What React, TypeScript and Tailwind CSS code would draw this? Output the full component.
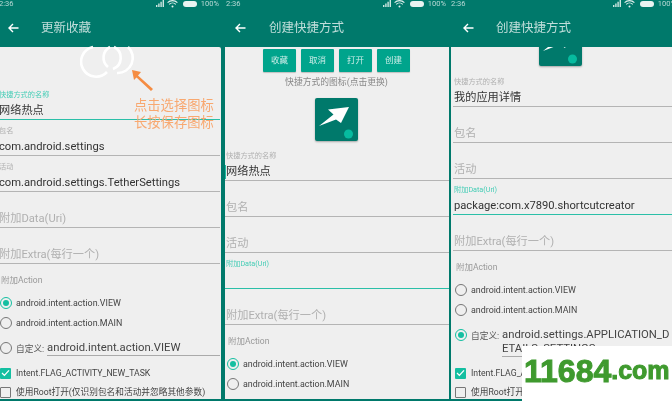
const font = { fontFamily: '"Roboto", "Noto Sans CJK SC", sans-serif' };

function StatusIcons() {
  return (
    <div className="flex items-center gap-[3px] text-[7.5px] leading-none text-white/70">
      <svg width="8" height="7" viewBox="0 0 8 7" fill="#cfe6e2">
        <path d="M0 7h1.4V5H0zM2.2 7h1.4V3.6H2.2zM4.4 7h1.4V1.8H4.4zM6.6 7H8V0H6.6z" />
      </svg>
      <svg width="11" height="8" viewBox="0 0 11 8" fill="none" stroke="#e6f2f0" strokeWidth="1.1">
        <path d="M.6 2.6a7 7 0 0 1 9.8 0M2.2 4.3a4.7 4.7 0 0 1 6.6 0" />
        <circle cx="5.5" cy="6.4" r="1" fill="#e6f2f0" stroke="none" />
      </svg>
      <div className="ml-[2px] h-[6px] w-[14px] rounded-[3px] bg-[#e8f3f1]" />
      <span className="ml-[1px]">100%</span>
    </div>
  );
}

function Header({ title, pad, titleGap }: { title: string; pad: string; titleGap: string }) {
  return (
    <div className={`h-[47px] shrink-0 bg-[#00796b] ${pad}`}>
      <div className="flex h-[7px] items-center justify-between text-[7.5px] leading-none text-white/70">
        <span>2:36</span>
        <StatusIcons />
      </div>
      <div className={`flex h-[42px] items-center ${titleGap}`}>
        <svg width="11" height="10" viewBox="0 0 11 10" fill="none" stroke="#fff" strokeWidth="1.4" className="shrink-0">
          <path d="M10.5 5H1M5 1 1 5l4 4" />
        </svg>
        <span className="text-[12.5px] leading-none text-white/75">{title}</span>
      </div>
    </div>
  );
}

function Field({
  label,
  value,
  placeholder,
  focused,
  cursor,
}: {
  label?: string;
  value?: string;
  placeholder?: string;
  focused?: boolean;
  cursor?: boolean;
}) {
  return (
    <div
      className={`flex h-[36px] flex-col justify-end border-b-[1.5px] pb-[1px] ${
        focused ? "border-[#2bbfa8]" : "border-[#b4b4b4]"
      }`}
    >
      {label && (
        <div className={`mb-[4px] pl-px text-[7.2px] leading-[11px] ${focused ? "text-[#45cdb6]" : "text-[#b0b0b0]"}`}>{label}</div>
      )}
      {value !== undefined ? (
        <div className="flex h-[14px] items-center text-[11.2px] leading-none text-[#333]">
          {cursor ? <span className="h-[14px] w-[1px] bg-[#1fbfa5]" /> : <span className="w-px" />}
          <span>{value}</span>
        </div>
      ) : placeholder ? (
        <div className="flex h-[14px] items-center pl-px text-[11.2px] leading-none text-[#b0b0b0]">{placeholder}</div>
      ) : (
        <div className="h-[14px]" />
      )}
    </div>
  );
}

function Radio({ checked }: { checked?: boolean }) {
  return (
    <span
      className={`flex h-[12px] w-[12px] shrink-0 items-center justify-center rounded-full border-[1.5px] ${
        checked ? "border-[#14bfa1]" : "border-[#777]"
      }`}
    >
      {checked && <span className="h-[6px] w-[6px] rounded-full bg-[#14bfa1]" />}
    </span>
  );
}

function RadioRow({ text, checked }: { text: string; checked?: boolean }) {
  return (
    <div className="flex h-[20px] items-center gap-[4px] pl-[2px] text-[8.9px] leading-none text-[#444]">
      <Radio checked={checked} />
      {text}
    </div>
  );
}

function CustomRow({ lines, checked, height }: { lines: string[]; checked?: boolean; height: string }) {
  return (
    <div className={`flex items-start gap-[4px] pl-[2px] pt-[9px] ${height}`}>
      <Radio checked={checked} />
      <span className="mt-[2px] w-[28px] shrink-0 whitespace-nowrap text-[8.7px] leading-[10px] text-[#555]">自定义:</span>
      <div className="-ml-px -mt-[1px] min-w-0 flex-1 overflow-hidden border-b border-[#aaa] text-[11.3px] leading-[14px] text-[#444]">
        {lines.map((line) => (
          <div key={line} className="whitespace-nowrap">
            {line}
          </div>
        ))}
      </div>
    </div>
  );
}

function CheckRow({ text, checked, height }: { text: string; checked?: boolean; height: string }) {
  return (
    <div className={`flex items-center gap-[5px] whitespace-nowrap pl-[2px] text-[8.7px] leading-none text-[#444] ${height}`}>
      {checked ? (
        <span className="flex h-[11px] w-[11px] shrink-0 items-center justify-center rounded-[1px] bg-[#14bfa1]">
          <svg width="9" height="8" viewBox="0 0 9 8" fill="none" stroke="#fff" strokeWidth="1.3">
            <path d="M1 4l2.4 2.4L8 1.4" />
          </svg>
        </span>
      ) : (
        <span className="h-[11px] w-[11px] shrink-0 rounded-[1px] border-[1.5px] border-[#777]" />
      )}
      {text}
    </div>
  );
}

function ActionLabel() {
  return <div className="mt-[10px] h-[19px] pl-[3px] text-[8.5px] leading-[12px] text-[#999]">附加Action</div>;
}

function ShortcutIcon() {
  return (
    <svg width="43" height="43" viewBox="0 0 43 43" className="shrink-0 rounded-[2px] bg-[#00796b] shadow-[0_1px_2px_rgba(0,0,0,0.3)]">
      <path d="M34 9 13 11.5l5.5 5L4 28l17-6.5 5 3.5z" fill="#fff" />
      <circle cx="33.5" cy="36" r="4.5" fill="#06bb9f" />
    </svg>
  );
}

function ActionButton({ text }: { text: string }) {
  return (
    <button className="flex h-[23px] w-[33px] items-center justify-center rounded-[1px] bg-[#00a48c] text-[8.5px] leading-none text-white/80 shadow-[0_1px_1px_rgba(0,0,0,0.2)]">
      {text}
    </button>
  );
}

function UpdatePanel() {
  return (
    <div className="flex w-[221px] shrink-0 flex-col">
      <Header title="更新收藏" pad="-ml-px pr-[2px]" titleGap="gap-[22px] pl-[9px]" />
      <div className="h-[352px] overflow-hidden rounded-tr-[2px] bg-[#efefef]">
        <div className="-ml-[2px] pr-[1px] pt-[37px]">
          <Field label="快捷方式的名称" value="网络热点" focused />
          <Field label="包名" value="com.android.settings" />
          <Field label="活动" value="com.android.settings.TetherSettings" />
          <Field placeholder="附加Data(Uri)" />
          <Field placeholder="附加Extra(每行一个)" />
          <ActionLabel />
          <RadioRow text="android.intent.action.VIEW" checked />
          <RadioRow text="android.intent.action.MAIN" />
          <CustomRow lines={["android.intent.action.VIEW"]} height="h-[30px]" />
          <CheckRow text="Intent.FLAG_ACTIVITY_NEW_TASK" checked height="h-[20px]" />
          <CheckRow text="使用Root打开(仅识别包名和活动并忽略其他参数)" height="h-[18px]" />
        </div>
      </div>
    </div>
  );
}

function CreatePanel() {
  return (
    <div className="ml-[4px] flex w-[224px] shrink-0 flex-col">
      <Header title="创建快捷方式" pad="pl-px pr-[3px]" titleGap="gap-[23px] pl-[9px]" />
      <div className="h-[352px] overflow-hidden bg-[#efefef]">
        <div className="flex justify-center gap-[5px] pr-[1px] pt-[2px]">
          <ActionButton text="收藏" />
          <ActionButton text="取消" />
          <ActionButton text="打开" />
          <ActionButton text="创建" />
        </div>
        <div className="mt-[5px] pr-[1px] text-center text-[8.8px] leading-[11px] text-[#888]">快捷方式的图标(点击更换)</div>
        <div className="mb-[4px] mt-[10px] flex justify-center pr-px">
          <ShortcutIcon />
        </div>
        <Field label="快捷方式的名称" value="网络热点" cursor />
        <Field placeholder="包名" />
        <Field placeholder="活动" />
        <Field label="附加Data(Uri)" focused />
        <Field placeholder="附加Extra(每行一个)" />
        <ActionLabel />
        <RadioRow text="android.intent.action.VIEW" checked />
        <RadioRow text="android.intent.action.MAIN" />
      </div>
    </div>
  );
}

function DetailPanel() {
  return (
    <div className="ml-[2px] flex w-[221px] shrink-0 flex-col">
      <Header title="创建快捷方式" pad="-mr-[4px]" titleGap="gap-[22px] pl-[12px]" />
      <div className="h-[352px] overflow-hidden bg-[#efefef]">
        <div className="pl-[2px]">
          <div className="flex h-[24px] items-end justify-center pb-[5px] pr-[4px]">
            <ShortcutIcon />
          </div>
          <Field label="快捷方式的名称" value="我的应用详情" />
          <Field placeholder="包名" />
          <Field placeholder="活动" />
          <Field label="附加Data(Uri)" value="package:com.x7890.shortcutcreator" focused />
          <Field placeholder="附加Extra(每行一个)" />
          <ActionLabel />
          <RadioRow text="android.intent.action.VIEW" />
          <RadioRow text="android.intent.action.MAIN" />
          <CustomRow lines={["android.settings.APPLICATION_D", "ETAILS_SETTINGS"]} checked height="h-[43px]" />
          <CheckRow text="Intent.FLAG_ACTIVITY_NEW_TASK" checked height="h-[20px]" />
          <CheckRow text="使用Root打开(仅识别包名和活动并忽略其他参数)" height="h-[18px]" />
        </div>
      </div>
    </div>
  );
}

export default function App() {
  return (
    <div className="relative flex h-[401px] w-[672px] overflow-hidden bg-[#00796b] blur-[0.35px]" style={font}>
      <UpdatePanel />
      <CreatePanel />
      <DetailPanel />

      {/* rings on the first screen */}
      <svg className="absolute left-[80px] top-[42px]" width="58" height="36" viewBox="0 0 58 36" fill="none" stroke="#fff" strokeWidth="2.6">
        <path d="M13 5A15 15 0 1 0 27 30" />
        <path d="M30 5A12 12 0 0 0 28 25" />
        <path d="M34 5A12 12 0 0 1 33 27" />
        <path d="M48 5A15 15 0 0 1 37 31" />
      </svg>

      {/* annotation */}
      <svg className="absolute left-[128px] top-[66px]" width="30" height="28" viewBox="0 0 30 28" fill="#f58c42">
        <path d="M4 4 13 6 10 9.5 25 23 23 25 8.5 11.5 6 14z" />
      </svg>
      <div className="absolute left-[134px] top-[97px] text-[13.3px] leading-[17px] text-[#f8a870]">
        <div>点击选择图标</div>
        <div>长按保存图标</div>
      </div>

      {/* site watermark */}
      <div
        className="absolute bottom-0 right-0 flex h-[55px] w-[150px] items-center bg-white pb-[6px] pl-[2px] font-bold text-[#3f9a2e] [-webkit-text-stroke:1px_#3f9a2e]"
        style={{ fontFamily: '"Liberation Sans", sans-serif' }}
      >
        <span className="text-[32px] leading-none">11684</span>
        <span className="text-[25px] leading-none">.com</span>
      </div>
    </div>
  );
}
